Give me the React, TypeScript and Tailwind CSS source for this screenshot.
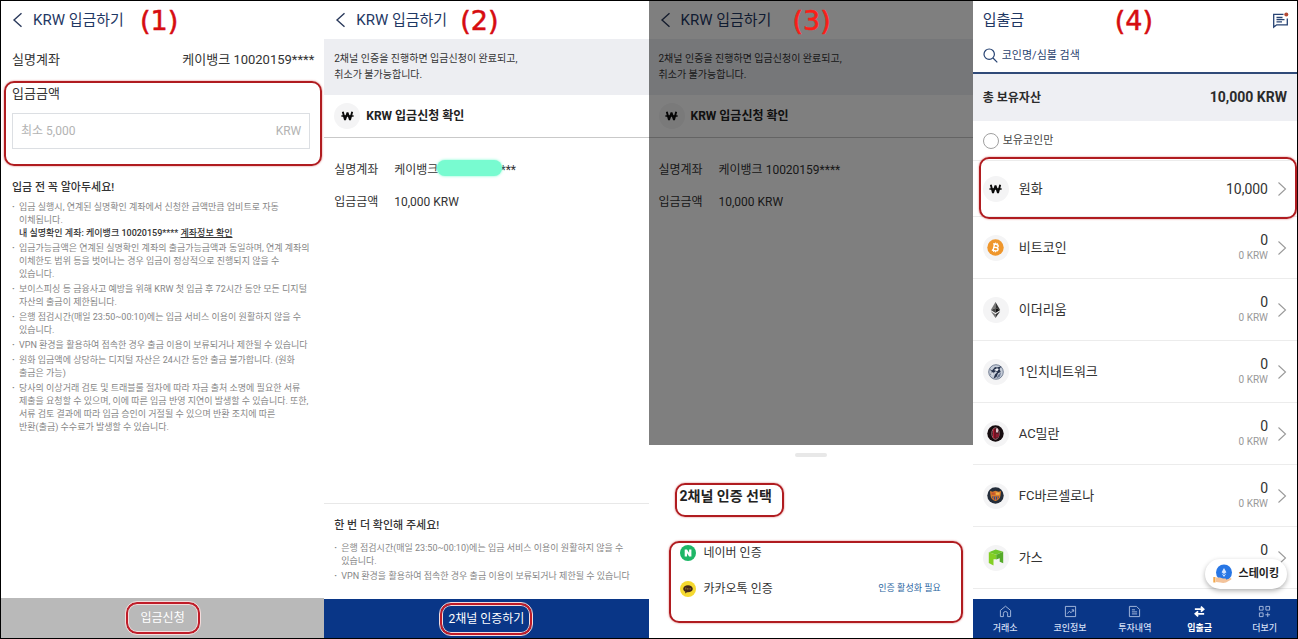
import React from "react";

const MARK = "border-2 border-[#b01c20] shadow-[0_0_2px_rgba(200,40,40,0.7)]";
const BUTTON_MARK =
  "flex h-8 items-center justify-center rounded-[11px] border-2 border-[#c01c28] outline-1 outline-[#f4dcdc] shadow-[inset_0_0_0_1px_#f4dcdc]";

function Step({ children, className }: { children: React.ReactNode; className: string }) {
  return (
    <span
      className={`absolute top-1 font-['DejaVu_Sans',sans-serif] text-[27px] leading-8 [-webkit-text-stroke:0.5px_currentColor] ${className}`}
    >
      {children}
    </span>
  );
}

function Header() {
  return (
    <header className="flex h-[38px] shrink-0 items-center gap-2.5 px-[11px]">
      <button type="button" aria-label="뒤로" className="shrink-0">
        <svg width="11" height="16" viewBox="0 0 11 16" fill="none" stroke="#2b3a5c" strokeWidth="1.4">
          <path d="M9.5 1.2 2 8l7.500 6.800" />
        </svg>
      </button>
      <h1 className="text-[15px] leading-5 text-[#1f3864]">KRW 입금하기</h1>
    </header>
  );
}

function Notes({ items }: { items: React.ReactNode[] }) {
  return (
    <ul className="flex flex-col gap-0.5 text-[9px] leading-[13px] text-[#868686]">
      {items.map((item, i) => (
        <li key={i} className="flex">
          <span className="w-[7px] shrink-0 font-bold">·</span>
          <div>{item}</div>
        </li>
      ))}
    </ul>
  );
}

const BANK_CHECK = (
  <>
    은행 점검시간(매일 23:50~00:10)에는 입금 서비스 이용이 원활하지 않을 수
    <br />
    있습니다.
  </>
);
const VPN = <span className="whitespace-nowrap">VPN 환경을 활용하여 접속한 경우 출금 이용이 보류되거나 제한될 수 있습니다</span>;

const DEPOSIT_NOTES = [
  <>
    입금 실행시, 연계된 실명확인 계좌에서 신청한 금액만큼 업비트로 자동
    <br />
    이체됩니다.
    <br />
    <span className="font-medium text-[#333]">
      내 실명확인 계좌: 케이뱅크 10020159****{" "}
      <a href="#account" className="underline">
        계좌정보 확인
      </a>
    </span>
  </>,
  <>
    입금가능금액은 연계된 실명확인 계좌의 출금가능금액과 동일하며, 연계 계좌의
    <br />
    이체한도 범위 등을 벗어나는 경우 입금이 정상적으로 진행되지 않을 수
    <br />
    있습니다.
  </>,
  <>
    보이스피싱 등 금융사고 예방을 위해 KRW 첫 입금 후 72시간 동안 모든 디지털
    <br />
    자산의 출금이 제한됩니다.
  </>,
  BANK_CHECK,
  VPN,
  <>
    원화 입금액에 상당하는 디지털 자산은 24시간 동안 출금 불가합니다. (원화
    <br />
    출금은 가능)
  </>,
  <>
    당사의 이상거래 검토 및 트래블룰 절차에 따라 자금 출처 소명에 필요한 서류
    <br />
    제출을 요청할 수 있으며, 이에 따른 입금 반영 지연이 발생할 수 있습니다. 또한,
    <br />
    서류 검토 결과에 따라 입금 승인이 거절될 수 있으며 반환 조치에 따른
    <br />
    반환(출금) 수수료가 발생할 수 있습니다.
  </>,
];

function DepositForm() {
  return (
    <section className="relative flex min-w-0 flex-col border-l border-black">
      <Header />
      <Step className="left-[139px] text-[#d60c10]">(1)</Step>
      <div className="flex h-[42px] items-center justify-between pr-2.5 pl-[11px] text-[13px] text-[#333]">
        <span>실명계좌</span>
        <span>케이뱅크 10020159****</span>
      </div>
      <div className={`mr-0.5 ml-[3px] h-[85px] rounded-[10px] px-1.5 pr-2.5 ${MARK}`}>
        <label htmlFor="amount" className="block pt-0.5 text-[13px] leading-[18px] text-[#333]">
          입금금액
        </label>
        <div className="mt-2.5 flex h-9 items-center border border-[#dcdfe3] px-2 text-[12px] text-[#b3b3b3]">
          <input
            id="amount"
            inputMode="numeric"
            placeholder="최소 5,000"
            className="min-w-0 flex-1 bg-transparent outline-none placeholder:text-[#b3b3b3]"
          />
          <span>KRW</span>
        </div>
      </div>
      <div className="pt-3.5 pl-[11px]">
        <h2 className="mb-[5px] text-[11px] leading-4 font-medium text-[#333]">입금 전 꼭 알아두세요!</h2>
        <Notes items={DEPOSIT_NOTES} />
      </div>
      <button
        type="button"
        className="mt-auto flex h-10 w-full items-center justify-center bg-[#b9b9b9] text-[12px] text-white"
      >
        <span className={`px-[13px] ${BUTTON_MARK}`}>입금신청</span>
      </button>
    </section>
  );
}

function CoinCircle({ children }: { children: React.ReactNode }) {
  return (
    <span className="flex size-[26px] shrink-0 items-center justify-center rounded-full bg-[#f4f4f5]">{children}</span>
  );
}

function Won() {
  return (
    <svg width="13" height="10" viewBox="0 0 13 10" fill="none" stroke="#0a0a0a">
      <path d="M1.800.8 4 9l2.500-7.500L9 9l2.200-8.200" strokeWidth="1.900" strokeLinejoin="bevel" />
      <path d="M.4 5h12.200" strokeWidth="1.500" />
    </svg>
  );
}

function Confirmation({ masked = false }: { masked?: boolean }) {
  return (
    <>
      <Header />
      <p className="bg-[#edeef2] px-2.5 py-3 text-[10px] leading-4 text-[#333]">
        2채널 인증을 진행하면 입금신청이 완료되고,
        <br />
        취소가 불가능합니다.
      </p>
      <div className="flex h-[43px] items-center gap-1.5 border-b border-[#c9c9c9] px-2.5">
        <CoinCircle>
          <Won />
        </CoinCircle>
        <h2 className="text-[12px] font-bold text-[#222]">KRW 입금신청 확인</h2>
      </div>
      <dl className="grid grid-cols-[60px_1fr] gap-y-3 px-2.5 pt-[22px] text-[12px] leading-5 text-[#333]">
        <dt>실명계좌</dt>
        <dd className="relative">
          케이뱅크 10020159****
          {masked && (
            <span className="absolute top-0 left-[43px] h-4 w-[65px] rounded-lg bg-[#78fbd0] shadow-[0_0_3px_#78fbd0]" />
          )}
        </dd>
        <dt>입금금액</dt>
        <dd>10,000 KRW</dd>
      </dl>
    </>
  );
}

function ConfirmPanel() {
  return (
    <section className="relative flex min-w-0 flex-col">
      <Confirmation masked />
      <Step className="left-[136px] text-[#d60c10]">(2)</Step>
      <div className="mt-auto border-t border-[#e8e8e8] px-2.5 pt-3.5 pb-4">
        <h2 className="mb-2 text-[11px] leading-4 font-medium text-[#333]">한 번 더 확인해 주세요!</h2>
        <Notes items={[BANK_CHECK, VPN]} />
      </div>
      <button type="button" className="flex h-[39px] items-center justify-center bg-[#093687] text-[12px] text-white">
        <span className={`px-1.5 ${BUTTON_MARK}`}>2채널 인증하기</span>
      </button>
    </section>
  );
}

function VerifyPanel() {
  return (
    <section className="relative flex min-w-0 flex-col">
      <div className="relative flex-1">
        <Confirmation />
        <div className="absolute inset-0 bg-black/50" />
      </div>
      <Step className="left-36 text-[#fb1e18]">(3)</Step>
      <div role="dialog" aria-labelledby="verify-title" className="h-[193px] bg-white pt-2">
        <div className="mx-auto h-1 w-8 rounded-full bg-[#e8e8e8]" />
        <h2
          id="verify-title"
          className={`mt-[26px] ml-[26px] h-[34px] w-[109px] rounded-[10px] pl-[3px] text-[14px] leading-[23px] font-bold text-[#222] ${MARK}`}
        >
          2채널 인증 선택
        </h2>
        <div className={`mt-6 mr-2.5 ml-5 flex h-[82px] flex-col gap-4 rounded-[10px] pl-[9px] text-[12px] text-[#333] ${MARK}`}>
          <button type="button" className="flex h-5 items-center gap-2">
            <svg width="16" height="16" viewBox="0 0 16 16">
              <circle cx="8" cy="8" r="8" fill="#1eb767" />
              <path d="M4.700 4.500h2.300l2.100 3.200V4.500h2.300v7H9.100L7 8.300v3.200H4.700z" fill="#fff" />
            </svg>
            네이버 인증
          </button>
          <button type="button" className="flex h-5 items-center gap-2 pr-5">
            <svg width="16" height="16" viewBox="0 0 16 16">
              <circle cx="8" cy="8" r="8" fill="#f5d930" />
              <path d="M8 4.200c-2.700 0-4.800 1.600-4.800 3.600 0 1.300.9 2.400 2.200 3l-.4 1.700 2-1.200H8c2.700 0 4.800-1.500 4.800-3.500S10.700 4.200 8 4.200z" fill="#42271b" />
              <path d="M5 7h1.500M5.800 7v1.700M7.500 8.700V7M9 7v1.700M10.500 7v1.700" stroke="#a8862f" strokeWidth=".6" />
            </svg>
            카카오톡 인증
            <span className="ml-auto text-[9px] text-[#2c669f]">인증 활성화 필요</span>
          </button>
        </div>
      </div>
    </section>
  );
}

const ICONS = {
  won: <Won />,
  btc: (
    <svg width="17" height="17" viewBox="0 0 17 17">
      <circle cx="8.500" cy="8.500" r="8.200" fill="#ef962b" />
      <g fill="none" stroke="#fff" strokeWidth="1.400" transform="rotate(12 8.500 8.500)">
        <path d="M6.800 5.300v6.400M5.500 5.300h3.700q1.700.1 1.700 1.600T9.200 8.400H7M5.500 11.700h4q1.900-.1 1.900-1.700T9.500 8.400" />
        <path d="M7.500 3.700v1.500M9.300 3.700v1.500M7.500 11.800v1.500M9.300 11.800v1.500" strokeWidth=".9" />
      </g>
    </svg>
  ),
  eth: (
    <svg width="11" height="16" viewBox="0 0 11 16">
      <path d="M5.500 0 .8 8l4.700-2.100z" fill="#777" />
      <path d="m5.500 0 4.700 8-4.700-2.100z" fill="#333" />
      <path d="M.8 8l4.700-2.100v5z" fill="#444" />
      <path d="m10.200 8-4.700-2.100v5z" fill="#111" />
      <path d="m.8 9.300 4.700 2.900v3.700z" fill="#777" />
      <path d="m10.200 9.300-4.700 2.900v3.700z" fill="#333" />
    </svg>
  ),
  inch: (
    <svg width="16" height="16" viewBox="0 0 16 16">
      <circle cx="8" cy="8" r="7.300" fill="#c5ccd8" stroke="#5b6880" strokeWidth=".8" />
      <path d="M1.500 5 4 6.500 7 3l2 .5 4.500-1.300-2 2.800 1.200 3-2.700 1.200L8.500 13l-3 1.500L7 10.500l2-2-1-1.500-2.500 2L2 11l2-3z" fill="#26324b" />
      <path d="m6 6 3-1.700 1.800.8-1.500 2.200zM3 9l2.500-1-1.500 3.500z" fill="#eef1f6" />
      <path d="m10 11 3-2.500-1 4-3.500 2z" fill="#6a7892" />
    </svg>
  ),
  milan: (
    <svg width="17" height="17" viewBox="0 0 17 17">
      <circle cx="8.500" cy="8.500" r="8.200" fill="#160d10" />
      <ellipse cx="8.500" cy="8.500" rx="3.700" ry="5.800" fill="#2a0a10" stroke="#c18c94" strokeWidth=".8" />
      <path d="M6.500 4v9M8 3.500v10" stroke="#b21d33" />
      <path d="M9 3.500h2v4H9z" fill="#ddc6ca" />
      <path d="M9 8.500h3v3L9 13z" fill="#8a1c30" />
    </svg>
  ),
  barca: (
    <svg width="17" height="17" viewBox="0 0 17 17">
      <circle cx="8.500" cy="8.500" r="8.200" fill="#242d3a" />
      <path d="m3 4 2.500.7 3-1 3 1L14 4l-.5 4.500c-.3 3-2 4.500-5 5.600-3-1.100-4.700-2.600-5-5.600z" fill="#d97c2b" />
      <path d="M5 9.500h7c-.3 1.800-1.400 2.800-3.500 3.600-2.100-.8-3.200-1.800-3.500-3.600z" fill="#324c86" />
      <path d="M6.500 9.500v2.700M8.500 9.500v3.500M10.500 9.500v2.700" stroke="#c5642f" strokeWidth="1" />
      <path d="M4.500 5.500h3.300v2.300H4.500z" fill="#c4532f" />
      <path d="M9 5.500h3.500v2.300H9z" fill="#efb14c" />
    </svg>
  ),
  gas: (
    <svg width="16" height="17" viewBox="0 0 16 17">
      <path d="m.8 3.200 6.900-2.700 7.500 2.300-7 3z" fill="#6fc62b" />
      <path d="M.8 3.200 8.200 5.800v4.400H5.500v6.300L.8 14z" fill="#83cf24" />
      <path d="m8.200 5.800 7-3v11.500l-3.500-1.500V9.300l-3.500 1.200z" fill="#55aa2a" />
    </svg>
  ),
};

const COINS: { name: string; icon: keyof typeof ICONS; amount: string; krw?: string }[] = [
  { name: "비트코인", icon: "btc", amount: "0", krw: "0 KRW" },
  { name: "이더리움", icon: "eth", amount: "0", krw: "0 KRW" },
  { name: "1인치네트워크", icon: "inch", amount: "0", krw: "0 KRW" },
  { name: "AC밀란", icon: "milan", amount: "0", krw: "0 KRW" },
  { name: "FC바르셀로나", icon: "barca", amount: "0", krw: "0 KRW" },
  { name: "가스", icon: "gas", amount: "0" },
];

function CoinRow({ name, icon, amount, krw, className }: { name: string; icon: keyof typeof ICONS; amount: string; krw?: string; className: string }) {
  return (
    <a href={`#${icon}`} className={`flex items-center border-b border-[#ececec] pr-2.5 pl-2.5 text-[#333] ${className}`}>
      <CoinCircle>{ICONS[icon]}</CoinCircle>
      <span className="ml-2.5 text-[13px]">{name}</span>
      <span className="ml-auto flex flex-col text-right">
        <span className="text-[14px] leading-4">{amount}</span>
        {icon !== "won" && <span className="h-4 text-[10px] leading-4 text-[#999]">{krw}</span>}
      </span>
      <svg className="ml-[9px]" width="10" height="16" viewBox="0 0 10 16" fill="none" stroke="#999" strokeWidth="1.100">
        <path d="m1.500 1.500 7 6.500-7 6.500" />
      </svg>
    </a>
  );
}

const TABS = [
  { label: "거래소", icon: <path d="M1.500 5.800 7 1.300l5.500 4.500v6.700H9.300V9.300a2.300 2.300 0 0 0-4.600 0v3.200H1.500z" /> },
  { label: "코인정보", icon: <path d="M1.500 1.500h11v11h-11zM3.500 9.300l2.300-2.500 1.800 1.500 2.700-3M8.300 5.200h2.100v2.100" /> },
  { label: "투자내역", icon: <path d="M1.500 1.500h7.700l3.300 3.300v7.700h-11zM4.200 5.200h3.300M4.200 7.400h5.600M4.200 9.600h5.600" /> },
  {
    label: "입출금",
    active: true,
    icon: <path d="M2 4.500h9M8.500 1.800l2.900 2.700-2.900 2.700M12 9.500H3M5.500 6.800 2.600 9.500l2.900 2.700" strokeWidth="2" />,
  },
  { label: "더보기", icon: <path d="M1.500 1.500h4v4h-4zM8.500 1.500h4v4h-4zM1.500 8.500h4v4h-4zM10.500 8v5M8 10.500h5" /> },
];

function AssetsPanel() {
  return (
    <section className="relative flex min-w-0 flex-col">
      <header className="flex h-[38px] items-center justify-between pr-2 pl-2.5">
        <h1 className="text-[15px] text-[#1f3864]">입출금</h1>
        <button type="button" aria-label="알림">
          <svg width="17" height="17" viewBox="0 0 17 17" fill="none" stroke="#274373" strokeWidth="1.300">
            <path d="M11.500 2.300H1.700v12.800l3-2.300h10.600V6.500M4.500 5.500h6M4.500 7.700h8M4.500 9.900h5.500" />
            <circle cx="14.300" cy="2.600" r="2" fill="#b44a35" stroke="none" />
          </svg>
        </button>
      </header>
      <Step className="left-[142px] text-[#d60c10]">(4)</Step>
      <label className="flex h-[35px] items-center gap-1 border-b-2 border-[#304a78] px-2.5">
        <svg width="15" height="15" viewBox="0 0 15 15" fill="none" stroke="#274373" strokeWidth="1.200">
          <circle cx="6.200" cy="6.200" r="5.200" />
          <path d="m10 10 4.300 4.300" />
        </svg>
        <input
          type="search"
          aria-label="코인 검색"
          placeholder="코인명/심볼 검색"
          className="min-w-0 flex-1 bg-transparent pt-0.5 text-[11px] outline-none placeholder:text-[#2c4470]"
        />
      </label>
      <div className="flex h-[47px] items-center justify-between bg-[#eeeff3] px-2.5 font-bold text-[#2b2b2b]">
        <span className="text-[12px]">총 보유자산</span>
        <span className="text-[14px]">10,000 KRW</span>
      </div>
      <label className="flex h-10 items-center gap-1 border-b border-[#ececec] px-2.5 text-[11px] text-[#444]">
        <input type="checkbox" className="size-4 appearance-none rounded-full border border-[#a0a0a0]" />
        <span className="pt-0.5">보유코인만</span>
      </label>
      <div className="relative">
        <CoinRow name="원화" icon="won" amount="10,000" className="h-14" />
        <div className={`pointer-events-none absolute -top-1 right-0 -bottom-0.5 left-1.5 rounded-[10px] ${MARK}`} />
      </div>
      {COINS.map((coin) => (
        <CoinRow key={coin.name} {...coin} className="h-[62px]" />
      ))}
      <button
        type="button"
        className="absolute right-2.5 bottom-[49px] flex h-[30px] items-center gap-1.5 rounded-full bg-white px-2 text-[11px] font-bold text-[#222] shadow-[0_2px_5px_rgba(0,0,0,0.3)]"
      >
        <svg width="20" height="20" viewBox="0 0 20 20">
          <circle cx="11" cy="8.500" r="8" fill="#2776e5" />
          <path d="m11 4 2.400 4.300L11 10 8.600 8.300zM8.700 9.500 11 11l2.300-1.500L11 13z" fill="#d6e6ff" />
          <path d="M3 13.500h4l3 1h2.500q1 .2.800 1.200l4.300-1.700q1.300.2.700 1.400L13 18.500q-3 .8-5.500 0L3 18z" fill="#f3c39b" />
          <path d="M.3 13h2.200v5.500H.3z" fill="#f2a74a" />
        </svg>
        스테이킹
      </button>
      <nav className="mt-auto grid h-[39px] grid-cols-5 bg-[#093687]">
        {TABS.map(({ label, icon, active }) => (
          <a
            key={label}
            href={`#${label}`}
            className={`flex flex-col items-center gap-0.5 pt-1.5 text-[9px] leading-4 ${active ? "font-bold text-white" : "font-medium text-[#d3dff5]"}`}
          >
            <svg width="13" height="13" viewBox="0 0 14 14" fill="none" stroke="currentColor" strokeWidth="1" className={active ? "" : "opacity-80"}>
              {icon}
            </svg>
            {label}
          </a>
        ))}
      </nav>
    </section>
  );
}

export default function App() {
  return (
    <main className="grid min-h-screen grid-cols-4 border-t border-r border-b border-black bg-white font-[Roboto,'Noto_Sans_CJK_KR',sans-serif]">
      <DepositForm />
      <ConfirmPanel />
      <VerifyPanel />
      <AssetsPanel />
    </main>
  );
}
